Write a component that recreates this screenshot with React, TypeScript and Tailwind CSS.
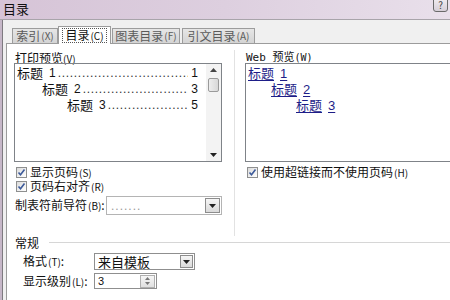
import React from "react";

const DOTS = ".".repeat(80);

function Check() {
  return (
    <span className="w-[11px] h-[11px] border border-[#8e8f8f] bg-gradient-to-br from-[#dcdcdc] to-[#ffffff] flex items-center justify-center shrink-0">
      <svg width="9" height="9" viewBox="0 0 9 9">
        <path d="M1.5 4.5 L3.5 6.8 L7.5 1.5" stroke="#3c5a9a" strokeWidth="1.6" fill="none" />
      </svg>
    </span>
  );
}

function Arrow() {
  return (
    <svg width="7" height="4" viewBox="0 0 7 4">
      <path d="M0 0 L7 0 L3.5 4 Z" fill="#222" />
    </svg>
  );
}

function TocLine({ indent, level, page }: { indent: string; level: string; page: string }) {
  return (
    <div className={`flex items-center h-[16px] pr-[8px] min-w-0 ${indent}`}>
      <span className="shrink-0">标题</span>
      <span className="shrink-0 ml-[6px] font-['Liberation_Sans',sans-serif] text-[12px]">{level}</span>
      <span className="flex-1 min-w-0 overflow-hidden whitespace-nowrap ml-[2px] font-['Liberation_Sans',sans-serif] text-[12px] tracking-[0.7px] text-[#333]">{DOTS}</span>
      <span className="shrink-0 ml-[3px] font-['Liberation_Sans',sans-serif] text-[12px]">{page}</span>
    </div>
  );
}

function WebLine({ indent, level }: { indent: string; level: string }) {
  return (
    <div className={`flex items-center h-[16px] ${indent}`}>
      <span className="text-[#1e1e88] underline underline-offset-2">
        标题<span className="ml-[6px] font-['Liberation_Sans',sans-serif]">{level}</span>
      </span>
    </div>
  );
}

export default function App() {
  return (
    <div className="w-[450px] h-[300px] overflow-hidden flex flex-col bg-[#f0f0f0] text-[12px] leading-[14px] text-[#111] font-['Noto_Sans_CJK_SC',sans-serif]">
      {/* title bar */}
      <div className="relative h-[20px] shrink-0 bg-gradient-to-r from-[#d6c4d7] via-[#ddcfdf] to-[#e9e0eb] flex items-start pt-[1px] pl-[3px] border-b border-[#a8a4aa]">
        <span className="text-[13px] leading-[15px]">目录</span>
        <div className="absolute right-[2px] top-[-3px] w-[15px] h-[15px] rounded-[3px] border border-[#6a6a6a] bg-gradient-to-b from-[#f2eef2] to-[#d6cfd8] flex items-center justify-center text-[10px] leading-[10px] text-[#444]">?</div>
      </div>
      {/* body */}
      <div className="flex-1 flex min-h-0">
        <div className="w-[3px] bg-[#c6b7c8] border-r border-[#7e7a80] shrink-0" />
        <div className="w-[3px] shrink-0" />
        <div className="flex-1 flex flex-col min-w-0">
          {/* tabs */}
          <div className="h-[23px] shrink-0 flex items-end pl-[6px] relative z-10">
            <div className="w-[46px] h-[15px] border border-b-0 border-[#9c9c9c] bg-gradient-to-b from-[#e6e6e6] to-[#d4d4d4] flex items-center justify-center text-[#5a5a5a] text-[12px]">
              索引<span className="text-[10px] ml-[1px]">(X)</span>
            </div>
            <div className="w-[53px] h-[18px] -mb-px border border-b-0 border-[#9c9c9c] bg-white flex items-center justify-center">
              <span className="border border-dotted border-[#555] px-[2px] leading-[12px]">目录<span className="text-[10px] ml-[1px]">(C)</span></span>
            </div>
            <div className="ml-[1px] w-[68px] h-[15px] border border-b-0 border-[#9c9c9c] bg-gradient-to-b from-[#e6e6e6] to-[#d4d4d4] flex items-center justify-center text-[#5a5a5a]">
              图表目录<span className="text-[10px] ml-[1px]">(F)</span>
            </div>
            <div className="ml-[2px] w-[73px] h-[15px] border border-b-0 border-[#9c9c9c] bg-gradient-to-b from-[#e6e6e6] to-[#d4d4d4] flex items-center justify-center text-[#5a5a5a]">
              引文目录<span className="text-[10px] ml-[1px]">(A)</span>
            </div>
          </div>
          {/* panel */}
          <div className="flex-1 bg-white border-t border-l border-[#9c9c9c] flex flex-col">
            <div className="h-[192px] flex shrink-0">
              {/* left column */}
              <div className="w-[216px] shrink-0 pl-[7px] pt-[8px] flex flex-col">
                <div className="h-[11px] leading-[11px] pl-[1px] text-[12px]">打印预览<span className="text-[10px]">(V)</span></div>
                <div className="w-[208px] h-[99px] border border-[#7f8388] flex">
                  <div className="flex-1 min-w-0 pt-[1px] text-[13px] leading-[16px]">
                    <TocLine indent="pl-[2px]" level="1" page="1" />
                    <TocLine indent="pl-[27px]" level="2" page="3" />
                    <TocLine indent="pl-[52px]" level="3" page="5" />
                  </div>
                  <div className="w-[15px] shrink-0 bg-[#f3f3f3] flex flex-col items-center justify-between py-[4px]">
                    <div className="flex flex-col items-center gap-[6px]">
                      <svg width="7" height="4" viewBox="0 0 7 4"><path d="M0 4 L7 4 L3.5 0 Z" fill="#444" /></svg>
                      <div className="w-[11px] h-[14px] rounded-[2px] border border-[#9a9a9a] bg-gradient-to-r from-[#eeeeee] to-[#d8d8d8]" />
                    </div>
                    <Arrow />
                  </div>
                </div>
                <div className="mt-[3px] h-[14px] flex items-center pl-[2px] gap-[3px]">
                  <Check />
                  <span>显示页码<span className="text-[10px] ml-[1px]">(S)</span></span>
                </div>
                <div className="h-[14px] flex items-center pl-[2px] gap-[3px]">
                  <Check />
                  <span>页码右对齐<span className="text-[10px] ml-[1px]">(R)</span></span>
                </div>
                <div className="mt-[3px] h-[19px] flex items-center">
                  <span className="w-[92px] pl-[1px]">制表符前导符<span className="text-[10px] ml-[1px]">(B)</span>:</span>
                  <div className="w-[116px] h-[19px] border border-[#b4b4b4] flex items-center justify-between pl-[4px] pr-[1px]">
                    <span className="text-[#999] font-['Liberation_Sans',sans-serif] tracking-[1px]">.......</span>
                    <div className="w-[15px] h-[15px] border border-[#8d8d8d] bg-gradient-to-b from-[#f6f6f6] to-[#dadada] flex items-center justify-center">
                      <Arrow />
                    </div>
                  </div>
                </div>
              </div>
              {/* separator */}
              <div className="w-[12px] shrink-0 border-r border-[#e2e2e2] mt-[6px]" />
              {/* right column */}
              <div className="flex-1 pl-[10px] pt-[8px] flex flex-col min-w-0">
                <div className="h-[11px] leading-[11px] pl-[1px] text-[11px] font-['DejaVu_Sans_Mono','Noto_Sans_CJK_SC',monospace]">Web 预览<span className="text-[10px]">(W)</span></div>
                <div className="w-[240px] h-[99px] border border-[#7f8388] pt-[1px] text-[13px] leading-[16px]">
                  <WebLine indent="pl-[2px]" level="1" />
                  <WebLine indent="pl-[25px]" level="2" />
                  <WebLine indent="pl-[50px]" level="3" />
                </div>
                <div className="mt-[3px] h-[14px] flex items-center pl-[2px] gap-[3px]">
                  <Check />
                  <span>使用超链接而不使用页码<span className="text-[10px] ml-[1px]">(H)</span></span>
                </div>
              </div>
            </div>
            {/* general */}
            <div className="h-[14px] flex items-center pl-[8px]">
              <span>常规</span>
              <div className="flex-1 ml-[10px] h-[2px] border-t border-[#d6d6d6] border-b border-b-white" />
            </div>
            <div className="mt-[3px] h-[17px] flex items-center pl-[16px]">
              <span className="w-[71px]">格式<span className="text-[10px] ml-[1px]">(T)</span>:</span>
              <div className="w-[101px] h-[17px] border border-[#8f8f8f] flex items-center justify-between pl-[3px] pr-[1px]">
                <span className="text-[13px]">来自模板</span>
                <div className="w-[13px] h-[13px] border border-[#8d8d8d] bg-gradient-to-b from-[#f6f6f6] to-[#dadada] flex items-center justify-center">
                  <Arrow />
                </div>
              </div>
            </div>
            <div className="mt-[3px] h-[16px] flex items-center pl-[16px]">
              <span className="w-[71px]">显示级别<span className="text-[10px] ml-[1px]">(L)</span>:</span>
              <div className="w-[63px] h-[16px] border border-[#8f8f8f] flex items-center justify-between pl-[3px] pr-[1px]">
                <span className="font-['Liberation_Sans',sans-serif] text-[11px]">3</span>
                <div className="w-[15px] h-[13px] border border-[#b0b0b0] bg-gradient-to-b from-[#f6f6f6] to-[#e0e0e0] flex flex-col items-center justify-center gap-[2px]">
                  <svg width="5" height="3" viewBox="0 0 5 3"><path d="M0 3 L5 3 L2.5 0 Z" fill="#777" /></svg>
                  <svg width="5" height="3" viewBox="0 0 5 3"><path d="M0 0 L5 0 L2.5 3 Z" fill="#777" /></svg>
                </div>
              </div>
            </div>
          </div>
        </div>
      </div>
    </div>
  );
}
